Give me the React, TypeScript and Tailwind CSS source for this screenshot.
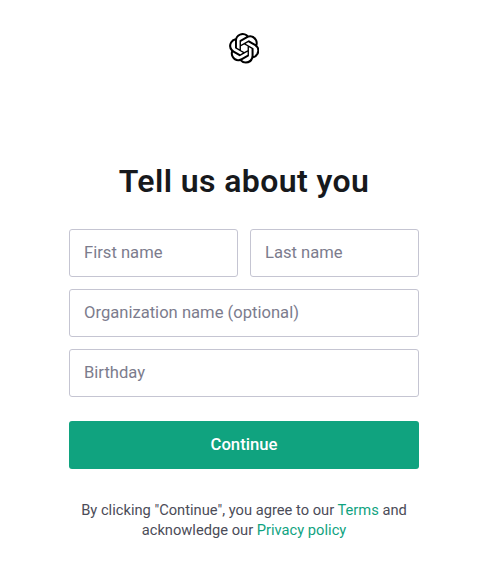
import { SiOpenai } from "react-icons/si";

const field =
  "block h-12 w-full min-w-0 rounded-[3px] border border-[#c5c5d2] bg-white px-[14px] pb-[1px] text-[16.6px] text-[#353740] placeholder:text-[#7c7c8d] placeholder:opacity-100 outline-none";

export default function App() {
  return (
    <main className="flex h-[576px] w-[480px] flex-col bg-white font-['Roboto',sans-serif] text-[#4b4c58]">
      <header className="flex justify-center pt-[33px] pl-[8px]">
        <SiOpenai className="size-[30.5px] text-black" />
      </header>
      <section className="ml-[69px] mt-[93px] w-[350px]">
        <h1 className="text-center text-[32px] font-semibold leading-[48px] tracking-[0.4px] text-[#17191c]">
          <span className="whitespace-nowrap">Tell us about you</span>
        </h1>
        <form className="mt-[24.5px] flex flex-col gap-3">
          <div className="grid grid-cols-[169px_169px] gap-3">
            <input className={field} placeholder="First name" />
            <input className={field} placeholder="Last name" />
          </div>
          <input className={field} placeholder="Organization name (optional)" />
          <input className={field} placeholder="Birthday" />
          <button type="button" className="mt-3 h-12 rounded-[3px] bg-[#10a37f] text-[16.7px] font-medium text-white">
            Continue
          </button>
        </form>
        <p className="mt-[31px] whitespace-nowrap text-center text-[14.7px] leading-5">
          By clicking "Continue", you agree to our <a className="text-[#10a37f]">Terms</a> and
          <br />
          acknowledge our <a className="text-[#10a37f]">Privacy policy</a>
        </p>
      </section>
    </main>
  );
}
